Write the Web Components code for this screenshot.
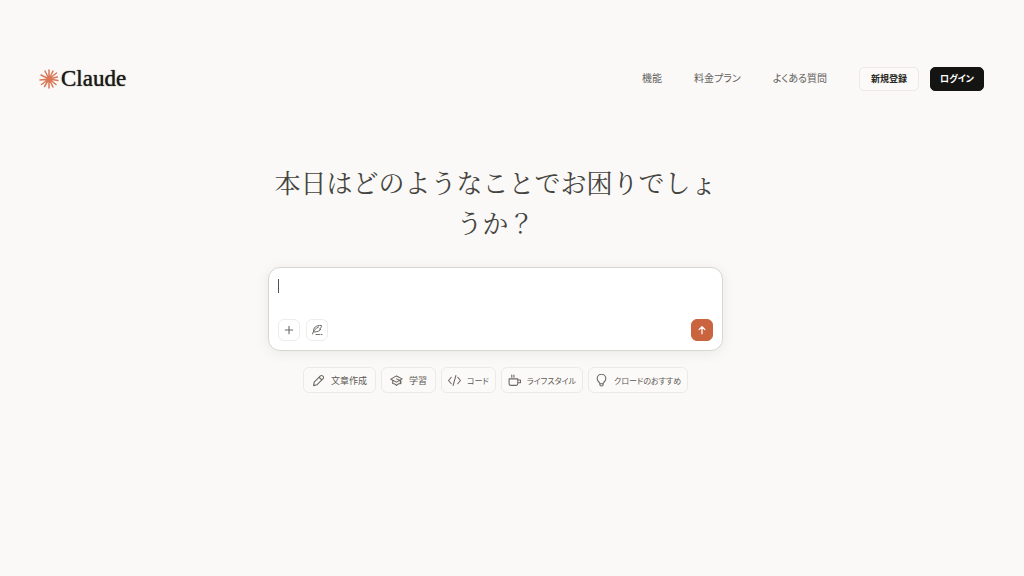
<!DOCTYPE html>
<html lang="ja">
<head>
<meta charset="utf-8">
<meta name="viewport" content="width=device-width, initial-scale=1">
<title>Claude</title>
<style>
  body {
    margin: 0;
    min-height: 100vh;
    background: #faf9f7;
    color: #55534f;
    font-family: "Liberation Sans", "Noto Sans CJK JP", sans-serif;
    font-size: 9px;
    --accent: #c9643f;
    --line: #ebeae5;
    --ink: #141412;
  }
</style>
</head>
<body>
<claude-page></claude-page>

<script>
const define = (name, html, setup) => {
  const template = document.createElement('template');
  template.innerHTML = html;
  customElements.define(name, class extends HTMLElement {
    constructor() {
      super();
      this.attachShadow({ mode: 'open' }).append(template.content.cloneNode(true));
      if (setup) setup(this);
    }
  });
};

const svg = (body) => `<svg viewBox="0 0 24 24" fill="none" stroke="currentColor" stroke-width="2" stroke-linecap="round" stroke-linejoin="round" aria-hidden="true">${body}</svg>`;
const icons = {
  plus: svg('<path stroke-width="2.600" d="M12 3v18M3 12h18"/>'),
  quill: svg('<path d="M3 20C4 14 9 9 15 6M5 15C4 8 10 2 21 3C21 6 20 8 17 10H20C18 14 12 16 6 16M10 21h3M15 21h2M20 21h2"/>'),
  arrow: svg('<path stroke-width="3" d="M12 21V4M5 11l7-7 7 7"/>'),
  pencil: svg('<path d="M4 15 15.500 3.500a2.800 2.800 0 0 1 4 0l1 1a2.800 2.800 0 0 1 0 4L9 20l-6 1.500ZM13 6l5 5"/>'),
  cap: svg('<path d="M1.500 9.500 12 3.500l10.500 5.500L12 15ZM5 12v5.500c4 0 5 1 7 3.500 2-2.500 4-3.500 7-3.500V11M12 9l8 3.500V18"/>'),
  code: svg('<path d="M6 6 1 12l5 6M18 6l5 6-5 6M14.500 3l-5 18"/>'),
  cup: svg('<path d="M2 9h16v9a3 3 0 0 1-3 3H5a3 3 0 0 1-3-3ZM18 11h5v5h-5M7 2v4M11 2v4"/>'),
  bulb: svg('<path d="M9 18c0-3-5-4-5-9.500a8 8 0 0 1 16 0c0 5.500-5 6.500-5 9.500ZM9 18v2c0 3 6 3 6 0v-2"/>')
};

define('claude-logo', `
  <style>
    :host { display: block; }
    a { display: flex; align-items: center; gap: 2px; color: #1d1b18; text-decoration: none; }
    svg { width: 20px; height: 20px; color: #d97757; }
    span { font: 23px/24px "Liberation Serif", serif; text-shadow: 0 0 1px #1d1b18; }
  </style>
  <a href="#">
    <svg viewBox="0 0 40 40" fill="none" stroke="currentColor" stroke-width="3" stroke-linecap="round" aria-hidden="true">
      <path d="M20 20 20 2M20 20 28 4M20 20 35 8M20 20 37 16M20 20 38 23M20 20 34 31M20 20 28 36M20 20 20 38M20 20 11 35M20 20 5 31M20 20 2 22M20 20 4 12M20 20 12 4"/>
    </svg>
    <span>Claude</span>
  </a>`);

define('action-button', `
  <style>
    :host { display: block; }
    button {
      height: 24px; padding: 0 11px; border: 1px solid #eceae2; border-radius: 5px;
      background: #fbfaf8; color: #262521; font: inherit; font-weight: 700; line-height: 20px;
      font-feature-settings: "palt"; cursor: pointer; white-space: nowrap;
    }
    :host([primary]) button { padding: 0 9px; border-color: var(--ink); background: var(--ink); color: #fff; }
  </style>
  <button type="button"><slot></slot></button>`);

define('site-header', `
  <style>
    :host { display: block; padding: 67px 40px 0 39px; }
    header, nav, .actions { display: flex; align-items: center; }
    header { justify-content: space-between; }
    nav { gap: 32px; }
    nav a { color: #62605b; font-size: 10px; line-height: 16px; text-decoration: none; font-feature-settings: "palt"; }
    .actions { gap: 11px; }
    .right { display: flex; align-items: center; gap: 32px; }
  </style>
  <header>
    <claude-logo></claude-logo>
    <div class="right">
      <nav><a href="#">機能</a><a href="#">料金プラン</a><a href="#">よくある質問</a></nav>
      <div class="actions">
        <action-button>新規登録</action-button>
        <action-button primary>ログイン</action-button>
      </div>
    </div>
  </header>`);

define('tool-button', `
  <style>
    :host { display: block; }
    button {
      display: grid; place-items: center; width: 22px; height: 22px; padding: 0;
      border: 1px solid #eeedea; border-radius: 6px; background: #fff; color: #6b6a66; cursor: pointer;
    }
    svg { width: 12px; height: 12px; }
    :host([icon="plus"]) svg, :host([icon="arrow"]) svg { width: 10px; height: 10px; }
    :host([icon="arrow"]) button { border-color: var(--accent); background: var(--accent); color: #fff; }
  </style>
  <button type="button"></button>`, (el) => {
    const button = el.shadowRoot.querySelector('button');
    button.innerHTML = icons[el.getAttribute('icon')];
    button.setAttribute('aria-label', el.getAttribute('label'));
  });

define('prompt-box', `
  <style>
    :host { display: block; }
    form {
      box-sizing: border-box; display: flex; flex-direction: column; gap: 10px;
      padding: 9px; border: 1px solid #d8d6d2; border-radius: 12px;
      background: #fff; box-shadow: 0 2px 14px #00000012;
    }
    .field { display: flex; align-items: flex-start; }
    .caret { width: 1px; height: 14px; margin-top: 2px; background: #55534f; }
    textarea {
      flex: 1; height: 32px; padding: 0; border: 0; outline: 0; resize: none;
      background: none; font: inherit; font-size: 12px; line-height: 18px;
    }
    .bar { display: flex; justify-content: space-between; }
    .tools { display: flex; gap: 6px; }
  </style>
  <form>
    <div class="field"><i class="caret"></i><textarea aria-label="メッセージ"></textarea></div>
    <div class="bar">
      <div class="tools">
        <tool-button icon="plus" label="追加"></tool-button>
        <tool-button icon="quill" label="スタイル"></tool-button>
      </div>
      <tool-button icon="arrow" label="送信"></tool-button>
    </div>
  </form>`);

define('topic-chip', `
  <style>
    :host { display: block; }
    button {
      display: flex; align-items: center; gap: 6px; height: 26px; padding: 0 8px;
      border: 1px solid var(--line); border-radius: 6px; background: #fbfaf8;
      color: #5b5955; font: inherit; font-feature-settings: "palt"; white-space: nowrap; cursor: pointer;
    }
    :host([kana]) button { padding: 0 6px; font-size: 8px; }
    .icon { display: flex; color: #6b6862; }
    svg { width: 13px; height: 13px; }
  </style>
  <button type="button"><span class="icon"></span><slot></slot></button>`, (el) => {
    el.shadowRoot.querySelector('.icon').innerHTML = icons[el.getAttribute('icon')];
  });

define('claude-page', `
  <style>
    :host { display: block; }
    main { display: flex; flex-direction: column; align-items: center; padding: 71px 33px 24px 0; }
    .column { width: 100%; max-width: 455px; }
    h1 {
      margin: 0 0 25px; color: #454440; text-align: center;
      font: 400 26px/40px "Noto Serif CJK JP", "Noto Serif JP", "Liberation Serif", "Noto Sans CJK JP", serif;
    }
    .chips { display: flex; flex-wrap: wrap; justify-content: center; gap: 5px; margin-top: 16px; }
  </style>
  <site-header></site-header>
  <main>
    <div class="column">
      <h1>本日はどのようなことでお困りでしょうか？</h1>
      <prompt-box></prompt-box>
      <div class="chips">
        <topic-chip icon="pencil">文章作成</topic-chip>
        <topic-chip icon="cap">学習</topic-chip>
        <topic-chip icon="code" kana>コード</topic-chip>
        <topic-chip icon="cup" kana>ライフスタイル</topic-chip>
        <topic-chip icon="bulb" kana>クロードのおすすめ</topic-chip>
      </div>
    </div>
  </main>`);
</script>
</body>
</html>
